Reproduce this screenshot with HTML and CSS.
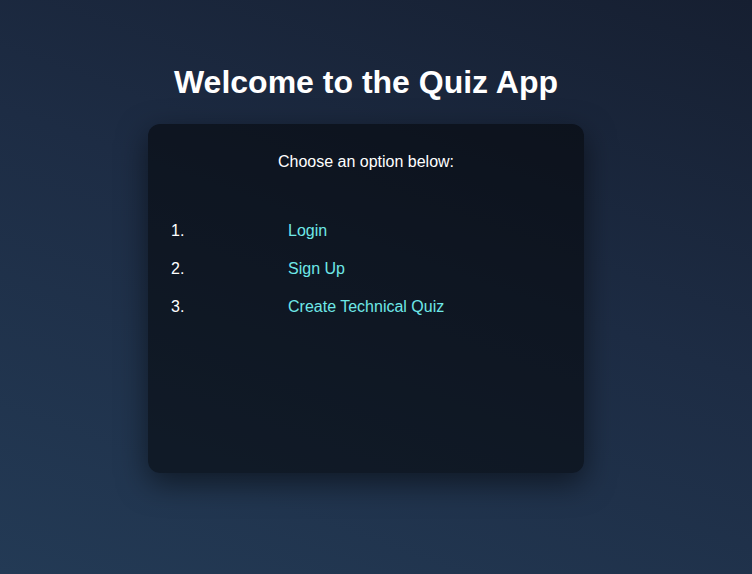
FILE: index.html
```html
<!DOCTYPE html>
<html lang="en">
<head>
<meta charset="utf-8">
<title>Quiz App</title>
<link rel="stylesheet" href="styles.css">
</head>
<body>
<main class="page">
  <h1 class="title">Welcome to the Quiz App</h1>
  <section class="card">
    <p class="intro">Choose an option below:</p>
    <ol class="menu">
      <li class="menu-item"><span class="num">1.</span><a class="link" href="#">Login</a></li>
      <li class="menu-item"><span class="num">2.</span><a class="link" href="#">Sign Up</a></li>
      <li class="menu-item"><span class="num">3.</span><a class="link" href="#">Create Technical Quiz</a></li>
    </ol>
  </section>
</main>
</body>
</html>
```

FILE: styles.css
```css
html, body {
  margin: 0;
  height: 100%;
}
body {
  background: linear-gradient(200deg, #161f31 0%, #1d2c44 45%, #233a55 100%);
  font-family: "Liberation Sans", Arial, sans-serif;
  color: #ffffff;
}
.page {
  display: flex;
  flex-direction: column;
  align-items: center;
  padding: 64px 20px 0 0;
}
.title {
  margin: 0 0 23px;
  font-size: 32px;
  line-height: 37px;
  font-weight: bold;
  color: #ffffff;
}
.card {
  width: 436px;
  height: 349px;
  box-sizing: border-box;
  background: rgba(0, 0, 0, 0.5);
  border-radius: 12px;
  box-shadow: 0 10px 30px rgba(0, 0, 0, 0.5);
  padding: 28px 23px 0;
}
.intro {
  margin: 0 0 49px;
  text-align: center;
  font-size: 16px;
  line-height: 20px;
}
.menu {
  list-style: none;
  margin: 0;
  padding: 0;
  display: flex;
  flex-direction: column;
  gap: 18px;
}
.menu-item {
  display: flex;
  font-size: 16px;
  line-height: 20px;
}
.num {
  width: 117px;
  flex: none;
}
.link {
  color: #6ee8e8;
  text-decoration: none;
}
```
